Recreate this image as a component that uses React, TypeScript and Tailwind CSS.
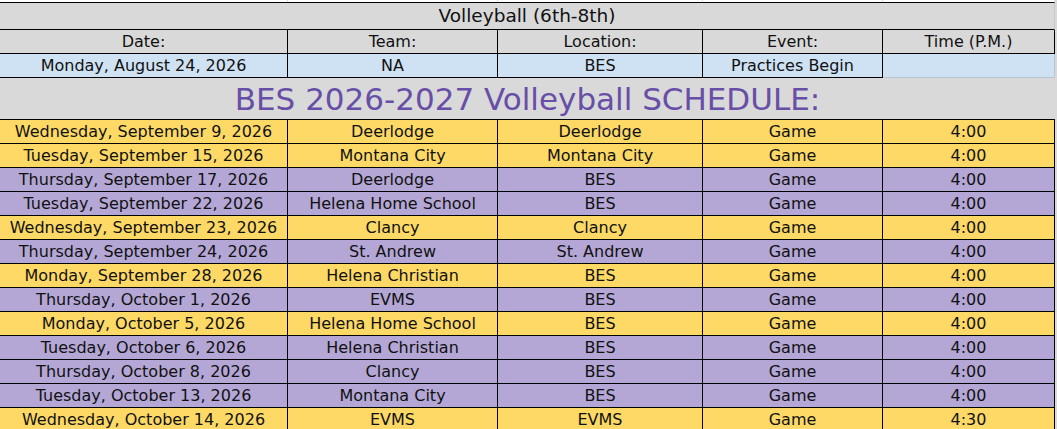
import React from "react";

type Row = { date: string; team: string; loc: string; time: string; c: "y" | "p" };

const rows: Row[] = [
  { date: "Wednesday, September 9, 2026", team: "Deerlodge", loc: "Deerlodge", time: "4:00", c: "y" },
  { date: "Tuesday, September 15, 2026", team: "Montana City", loc: "Montana City", time: "4:00", c: "y" },
  { date: "Thursday, September 17, 2026", team: "Deerlodge", loc: "BES", time: "4:00", c: "p" },
  { date: "Tuesday, September 22, 2026", team: "Helena Home School", loc: "BES", time: "4:00", c: "p" },
  { date: "Wednesday, September 23, 2026", team: "Clancy", loc: "Clancy", time: "4:00", c: "y" },
  { date: "Thursday, September 24, 2026", team: "St. Andrew", loc: "St. Andrew", time: "4:00", c: "p" },
  { date: "Monday, September 28, 2026", team: "Helena Christian", loc: "BES", time: "4:00", c: "y" },
  { date: "Thursday, October 1, 2026", team: "EVMS", loc: "BES", time: "4:00", c: "p" },
  { date: "Monday, October 5, 2026", team: "Helena Home School", loc: "BES", time: "4:00", c: "y" },
  { date: "Tuesday, October 6, 2026", team: "Helena Christian", loc: "BES", time: "4:00", c: "p" },
  { date: "Thursday, October 8, 2026", team: "Clancy", loc: "BES", time: "4:00", c: "p" },
  { date: "Tuesday, October 13, 2026", team: "Montana City", loc: "BES", time: "4:00", c: "p" },
  { date: "Wednesday, October 14, 2026", team: "EVMS", loc: "EVMS", time: "4:30", c: "y" },
];

const cols = "grid grid-cols-[288px_210px_205px_180px_172px]";
const cell = "flex items-center justify-center pt-[1px] border-r border-b border-black whitespace-nowrap overflow-hidden";

export default function App() {
  return (
    <div
      className="w-[1057px] h-[429px] overflow-hidden bg-[#d9d9d9] text-[#111] text-[16px] leading-none"
      style={{ fontFamily: '"DejaVu Sans", sans-serif' }}
    >
      <div className="w-[1055px]">
        {/* top white strip */}
        <div className={`${cols} h-[2px] bg-white`}>
          <div className="border-r border-[#e2e2e2]" />
          <div className="border-r border-[#e2e2e2]" />
          <div className="border-r border-[#e2e2e2]" />
          <div className="border-r border-[#e2e2e2]" />
          <div className="border-r border-[#e2e2e2]" />
        </div>
        {/* title */}
        <div className="h-[28px] pt-[1px] border-t border-b border-black border-r border-r-[#c8c8c8] flex items-center justify-center text-[18.5px]">
          Volleyball (6th-8th)
        </div>
        {/* headers */}
        <div className={`${cols} h-[24px]`}>
          <div className={cell}>Date:</div>
          <div className={cell}>Team:</div>
          <div className={cell}>Location:</div>
          <div className={cell}>Event:</div>
          <div className={cell}>Time (P.M.)</div>
        </div>
        {/* practices */}
        <div className={`${cols} h-[24px] bg-[#cfe2f3]`}>
          <div className={cell}>Monday, August 24, 2026</div>
          <div className={cell}>NA</div>
          <div className={cell}>BES</div>
          <div className={cell}>Practices Begin</div>
          <div className="border-r border-b border-[#b8c4cf]" />
        </div>
        {/* schedule title */}
        <div className="h-[42px] pt-[2px] border-b border-black flex items-center justify-center text-[31px] text-[#674ea7]">
          BES 2026-2027 Volleyball SCHEDULE:
        </div>
        {rows.map((r, i) => (
          <div key={i} className={`${cols} h-[24px] ${r.c === "y" ? "bg-[#ffd966]" : "bg-[#b4a7d6]"}`}>
            <div className={cell}>{r.date}</div>
            <div className={cell}>{r.team}</div>
            <div className={cell}>{r.loc}</div>
            <div className={cell}>Game</div>
            <div className={cell}>{r.time}</div>
          </div>
        ))}
      </div>
    </div>
  );
}
